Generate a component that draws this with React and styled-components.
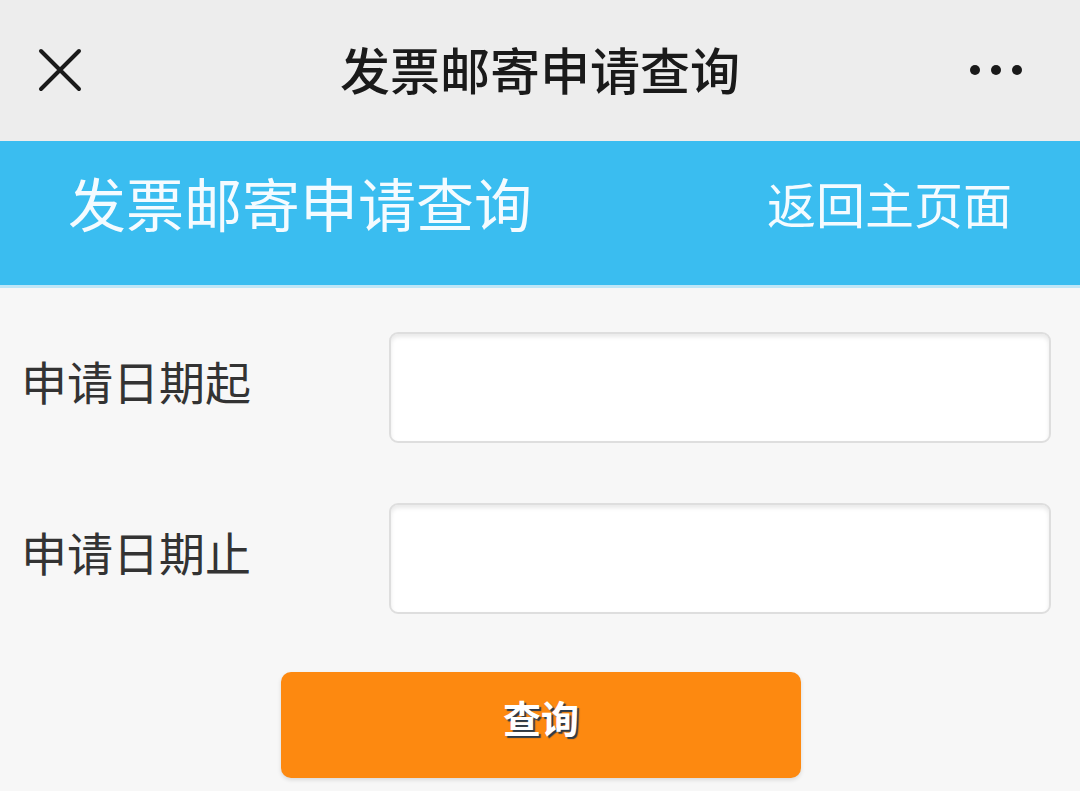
import React from "react";
import styled, { createGlobalStyle } from "styled-components";

const GlobalStyle = createGlobalStyle`
  html, body {
    margin: 0;
    padding: 0;
    background: #f7f7f7;
  }
  body {
    font-family: "Noto Sans CJK SC", "Noto Sans", sans-serif;
  }
`;

const Page = styled.div`
  width: 1080px;
  height: 791px;
  overflow: hidden;
  background: #f7f7f7;
`;

const TopBar = styled.div`
  height: 141px;
  background: #ededed;
  display: grid;
  grid-template-columns: 120px 1fr 120px;
  align-items: center;
`;

const CloseButton = styled.div`
  display: flex;
  align-items: center;
  padding-left: 38px;
  padding-bottom: 2px;
`;

const TopTitle = styled.div`
  text-align: center;
  font-size: 50px;
  font-weight: 500;
  color: #1a1a1a;
  padding-bottom: 6px;
`;

const MoreButton = styled.div`
  display: flex;
  justify-content: flex-end;
  gap: 11px;
  padding-right: 58px;
  padding-bottom: 2px;
`;

const Dot = styled.span`
  width: 10px;
  height: 10px;
  border-radius: 50%;
  background: #1a1a1a;
`;

const Header = styled.div`
  height: 147px;
  background: #3abdf0;
  border-bottom: 3px solid #bfe6f7;
  display: flex;
  align-items: center;
  justify-content: space-between;
  padding: 0 68px;
  box-sizing: border-box;
  color: #f4fbff;
`;

const HeaderTitle = styled.div`
  font-size: 58px;
  font-weight: 400;
  padding-bottom: 22px;
`;

const HeaderLink = styled.div`
  font-size: 49px;
  font-weight: 400;
  padding-bottom: 22px;
`;

const Form = styled.div`
  display: flex;
  flex-direction: column;
  gap: 60px;
  padding: 44px 29px 0 21px;
`;

const Row = styled.div`
  display: flex;
  align-items: center;
`;

const Label = styled.div`
  width: 368px;
  font-size: 46px;
  color: #333;
  padding-bottom: 16px;
`;

const Input = styled.div`
  flex: 1;
  height: 111px;
  background: #fff;
  border: 2px solid #dedede;
  border-radius: 9px;
  box-sizing: border-box;
  box-shadow: inset 0 3px 4px rgba(0, 0, 0, 0.09);
`;

const ButtonRow = styled.div`
  display: flex;
  justify-content: center;
  padding-top: 58px;
  padding-left: 2px;
`;

const Button = styled.div`
  width: 520px;
  height: 106px;
  background: #fd8910;
  border-radius: 10px;
  box-shadow: 0 2px 4px rgba(0, 0, 0, 0.12);
  display: flex;
  align-items: center;
  justify-content: center;
  color: #fff;
  font-size: 38px;
  font-weight: 700;
  text-shadow: 2px 2px 1px #2b3a4a;
  padding-bottom: 18px;
  box-sizing: border-box;
`;

export default function App() {
  return (
    <Page>
      <GlobalStyle />
      <TopBar>
        <CloseButton>
          <svg width="44" height="44" viewBox="0 0 44 44">
            <path
              d="M3 3 L41 41 M41 3 L3 41"
              stroke="#1a1a1a"
              strokeWidth="4"
              strokeLinecap="round"
            />
          </svg>
        </CloseButton>
        <TopTitle>发票邮寄申请查询</TopTitle>
        <MoreButton>
          <Dot />
          <Dot />
          <Dot />
        </MoreButton>
      </TopBar>
      <Header>
        <HeaderTitle>发票邮寄申请查询</HeaderTitle>
        <HeaderLink>返回主页面</HeaderLink>
      </Header>
      <Form>
        <Row>
          <Label>申请日期起</Label>
          <Input />
        </Row>
        <Row>
          <Label>申请日期止</Label>
          <Input />
        </Row>
      </Form>
      <ButtonRow>
        <Button>查询</Button>
      </ButtonRow>
    </Page>
  );
}
